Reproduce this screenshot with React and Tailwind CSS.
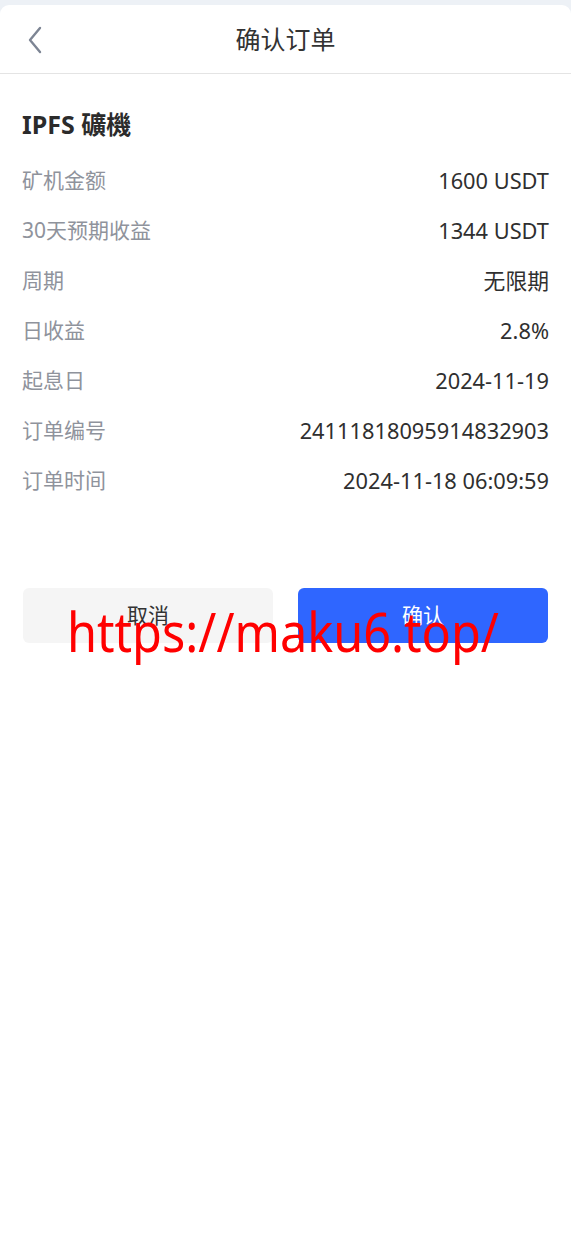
import React from "react";

const rows = [
  ["矿机金额", "1600 USDT"],
  ["30天预期收益", "1344 USDT"],
  ["周期", "无限期"],
  ["日收益", "2.8%"],
  ["起息日", "2024-11-19"],
  ["订单编号", "24111818095914832903"],
  ["订单时间", "2024-11-18 06:09:59"],
];

function BackIcon() {
  return (
    <svg width="18" height="28" viewBox="0 0 18 28" fill="none">
      <path d="M14 2 L4 14 L14 26" stroke="#7d8594" strokeWidth="2.4" strokeLinecap="round" strokeLinejoin="round" />
    </svg>
  );
}

export default function App() {
  return (
    <div
      className="min-h-screen bg-[#edf1f6] pt-[5px]"
      style={{ fontFamily: '"Noto Sans", "Noto Sans CJK SC", sans-serif' }}
    >
      <div className="relative min-h-[1239px] bg-white rounded-t-[9px]">
        {/* header */}
        <div className="relative h-[69px] flex items-center justify-center border-b border-[#e4e4e4]">
          <button className="absolute left-[26px] top-[21px]">
            <BackIcon />
          </button>
          <h1 className="text-[25px] text-[#333] leading-none">确认订单</h1>
        </div>

        {/* details */}
        <div className="px-[22px] pt-[32px]">
          <h2 className="text-[25px] font-bold text-[#2b2b2b] leading-[36px]">IPFS 礦機</h2>
          <div className="mt-[14px] flex flex-col">
            {rows.map(([label, value]) => (
              <div key={label} className="h-[50px] flex items-center justify-between">
                <span className="text-[21px] text-[#8f939c]">{label}</span>
                <span className="text-[21.8px] text-[#2f2f2f]">{value}</span>
              </div>
            ))}
          </div>
        </div>

        {/* buttons */}
        <div className="mt-[82px] px-[23px] flex gap-[25px]">
          <button className="flex-1 h-[55px] rounded-[6px] bg-[#f5f5f5] text-[21px] text-[#333]">取消</button>
          <button className="flex-1 h-[55px] rounded-[6px] bg-[#2f66ff] text-[21px] text-white">确认</button>
        </div>

        {/* watermark */}
        <div
          className="absolute left-[67px] top-[599px] text-[54px] leading-none text-[#ff0000] pointer-events-none whitespace-nowrap scale-x-90 origin-left"
          style={{ fontFamily: '"Noto Sans", sans-serif' }}
        >
          https://maku6.top/
        </div>
      </div>
    </div>
  );
}
